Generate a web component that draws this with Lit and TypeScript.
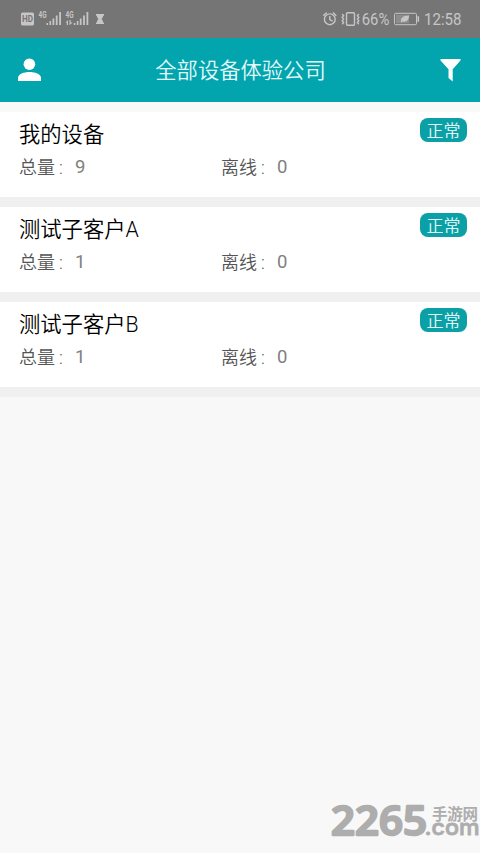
import { LitElement, html, css, svg } from 'lit';
import { customElement, property } from 'lit/decorators.js';

interface Customer {
  name: string;
  total: number;
  offline: number;
  status: string;
}

const CUSTOMERS: Customer[] = [
  { name: '我的设备', total: 9, offline: 0, status: '正常' },
  { name: '测试子客户A', total: 1, offline: 0, status: '正常' },
  { name: '测试子客户B', total: 1, offline: 0, status: '正常' },
];

const signalBars = svg`
  <rect x="0" y="11" width="1.6" height="2"/>
  <rect x="3" y="9" width="1.6" height="4"/>
  <rect x="6" y="6.5" width="1.8" height="6.5"/>
  <rect x="9.3" y="3.5" width="1.8" height="9.5"/>
  <rect x="12.7" y="0" width="1.8" height="13"/>
`;

@customElement('status-bar')
export class StatusBar extends LitElement {
  static styles = css`
    :host {
      display: flex;
      justify-content: space-between;
      height: 38px;
      background: #757575;
      color: #c6c6c6;
      font: 16px/38px Roboto, sans-serif;
    }

    svg {
      display: block;
      fill: currentColor;
    }

    .net {
      font: bold 8.5px Roboto, sans-serif;
    }

    .hd {
      font: bold 9px Roboto, sans-serif;
      fill: #757575;
    }
  `;

  render() {
    return html`
      <svg width="120" height="38">
        <rect x="21" y="12.5" width="13" height="13" rx="1.5"/>
        <text class="hd" x="22" y="22.3" textLength="11" lengthAdjust="spacingAndGlyphs">HD</text>
        <text class="net" x="38.5" y="18" textLength="8" lengthAdjust="spacingAndGlyphs">4G</text>
        <g transform="translate(46.5 12)">${signalBars}</g>
        <text class="net" x="65.5" y="18" textLength="8" lengthAdjust="spacingAndGlyphs">4G</text>
        <path d="M65.6 22.6l2.4-2.600v5h-1.200v-2.400zM69.500 20h1.200v2.600h2L69.500 25.300z"/>
        <g transform="translate(73.8 12)">${signalBars}</g>
        <path d="M96 14h8v1.700h-.9c0 1.800-1 2.600-1.700 3.400.7.700 1.700 1.600 1.700 3.300h.9V24h-8v-1.600h.9c0-1.700 1-2.600 1.700-3.300-.7-.8-1.700-1.600-1.700-3.400H96z"/>
      </svg>
      <svg width="160" height="38" viewBox="320 0 160 38">
        <g fill="none" stroke="currentColor" stroke-width="1.4">
          <circle cx="329.8" cy="19.3" r="5.4"/>
          <path d="M323.3 15.8l3.400-3.200M336.300 15.800l-3.400-3.200M329.800 16v3.500l2.800 1.600"/>
          <rect x="346.5" y="12.7" width="8" height="12.6" rx="1"/>
          <path d="M342.2 14l1.4 1.700-1.400 1.700 1.400 1.700-1.400 1.700 1.400 1.700-1.400 1.700M358.800 14l-1.400 1.700 1.400 1.700-1.400 1.700 1.400 1.700-1.400 1.700 1.400 1.700"/>
          <rect x="394.5" y="13.3" width="22" height="11.4" rx="1.2" stroke-width="1"/>
        </g>
        <rect x="396" y="14.8" width="13" height="8.4" opacity=".3"/>
        <path d="M401 22.3c-.6-4 2-6.800 8-6.700.2 4.600-2.800 7-6.600 5.800l-1 1.200zM417.500 16.300h1.600v5.400h-1.600z"/>
        <text x="361.8" y="24.7" textLength="27.5" lengthAdjust="spacingAndGlyphs">66%</text>
        <text x="424" y="24.7" textLength="37.5" lengthAdjust="spacingAndGlyphs">12:58</text>
      </svg>
    `;
  }
}

@customElement('title-bar')
export class TitleBar extends LitElement {
  @property() heading = '';

  static styles = css`
    :host {
      display: flex;
      align-items: center;
      justify-content: space-between;
      box-sizing: border-box;
      height: 64px;
      padding: 0 19px 0 18px;
      background: #02a4ae;
      color: #fff;
    }

    svg {
      display: block;
      fill: currentColor;
    }

    .heading {
      font-size: 21.3px;
      line-height: 32px;
      font-weight: 350;
      color: #e3fbfb;
      padding: 2px 0 0;
    }
  `;

  render() {
    return html`
      <svg width="23" height="24" viewBox="0 0 23 24">
        <circle cx="11.4" cy="6.2" r="5.8"/>
        <path d="M0 23v-3c0-3.800 6-5.900 11.500-5.900S23 16.200 23 20v3z"/>
      </svg>
      <div class="heading">${this.heading}</div>
      <svg width="21" height="24" viewBox="0 0 21 24">
        <path d="M.5 1h20v1.600l-7.800 8.600V23.500l-4.200-3.400v-8.900L.5 2.600z"/>
      </svg>
    `;
  }
}

@customElement('customer-card')
export class CustomerCard extends LitElement {
  @property({ attribute: false }) customer!: Customer;

  static styles = css`
    :host {
      display: block;
      box-sizing: border-box;
      height: 85px;
      padding: 6px 13px 0 19px;
      background: #fff;
    }

    .top {
      display: flex;
      justify-content: space-between;
      align-items: flex-start;
      height: 33px;
    }

    .name {
      padding-top: 1px;
      font-size: 21.3px;
      line-height: 32px;
      font-weight: 350;
      color: #000;
    }

    .badge {
      box-sizing: border-box;
      width: 47px;
      height: 24px;
      padding-top: 1px;
      border-radius: 8px;
      background: #0b9fa6;
      color: #e3fbfb;
      font-size: 17px;
      line-height: 24px;
      font-weight: 350;
      text-align: center;
    }

    .counts {
      display: grid;
      grid-template-columns: 202px 1fr;
      padding-top: 3px;
      font-size: 18px;
      line-height: 28px;
      font-weight: 350;
      color: #555;
    }

    .count {
      display: flex;
    }

    .colon {
      width: 20px;
      padding-left: 4px;
      box-sizing: border-box;
    }

    .number {
      font-size: 18.5px;
      line-height: 27px;
      font-weight: 400;
      color: #808080;
    }
  `;

  render() {
    const { name, total, offline, status } = this.customer;
    return html`
      <div class="top">
        <div class="name">${name}</div>
        <div class="badge">${status}</div>
      </div>
      <div class="counts">
        <div class="count">总量<span class="colon">:</span><span class="number">${total}</span></div>
        <div class="count">离线<span class="colon">:</span><span class="number">${offline}</span></div>
      </div>
    `;
  }
}

@customElement('site-mark')
export class SiteMark extends LitElement {
  static styles = css`
    :host {
      display: block;
    }

    svg {
      display: block;
      overflow: visible;
      fill: #adadad;
      stroke: #adadad;
      stroke-linejoin: round;
    }

    .digits {
      font: 600 40px 'Open Sans', sans-serif;
      stroke-width: 2.4px;
    }

    .site {
      font: bold 15.5px 'Noto Sans CJK SC', sans-serif;
      stroke: none;
    }

    .domain {
      font: 500 22px Inter, sans-serif;
      stroke-width: 0.8px;
    }
  `;

  render() {
    return html`
      <svg width="155" height="50" viewBox="325 797 155 50">
        <text class="digits" x="0" y="0" textLength="96" lengthAdjust="spacingAndGlyphs"
          transform="translate(331 834.6)">2265</text>
        <text class="site" x="432" y="819.5" textLength="46">手游网</text>
        <text class="domain" x="424.5" y="835" textLength="55" lengthAdjust="spacingAndGlyphs">.com</text>
      </svg>
    `;
  }
}

@customElement('app-root')
export class AppRoot extends LitElement {
  static styles = css`
    :host {
      display: flex;
      flex-direction: column;
      position: relative;
      height: 853px;
      overflow: hidden;
      background: #f8f8f8;
      font-family: Roboto, 'Noto Sans CJK SC', sans-serif;
    }

    .list {
      display: flex;
      flex-direction: column;
      gap: 10px;
      padding-bottom: 10px;
      border-top: 10px solid #f8f9f9;
      background: #f0f0f0;
    }

    .mark {
      position: absolute;
      right: 0;
      bottom: 6px;
    }
  `;

  render() {
    return html`
      <status-bar></status-bar>
      <title-bar heading="全部设备体验公司"></title-bar>
      <div class="list">
        ${CUSTOMERS.map((c) => html`<customer-card .customer=${c}></customer-card>`)}
      </div>
      <site-mark class="mark"></site-mark>
    `;
  }
}
